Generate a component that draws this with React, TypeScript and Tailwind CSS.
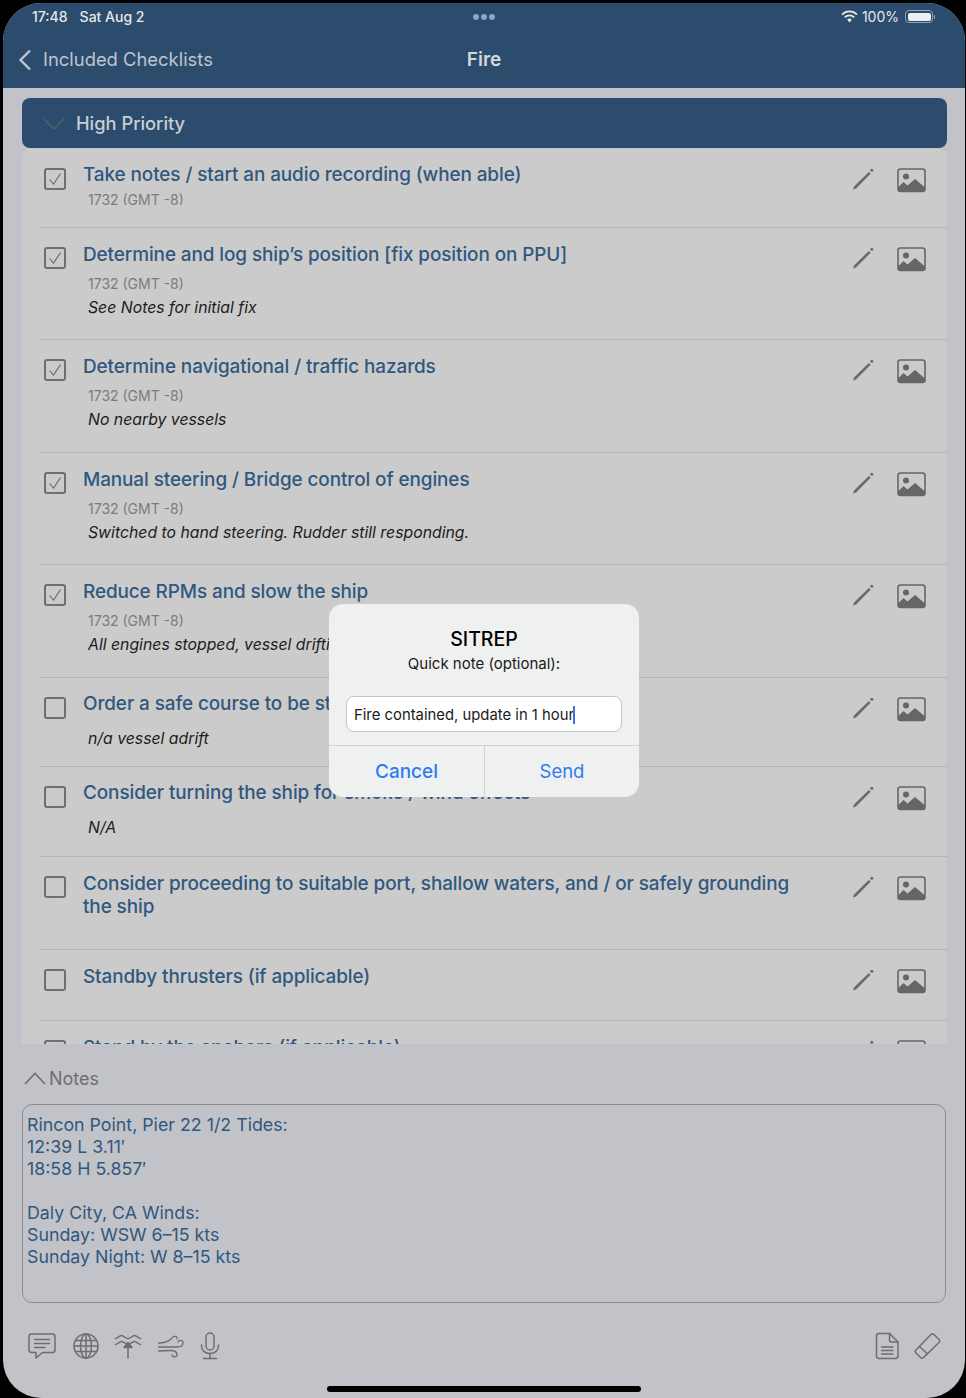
const NAVY = 'bg-[#2c4c6e]';

function PencilIcon() {
  return (
    <svg width="24" height="24" viewBox="0 0 24 24" className="shrink-0">
      <path d="M2 22.5 L3 19.5 L17.8 5 L19.6 6.8 L5 21.4 Z" fill="#6a6a6a" />
      <circle cx="20.8" cy="3.2" r="1.5" fill="#6a6a6a" />
    </svg>
  );
}

function ImageIcon() {
  return (
    <svg width="30" height="26" viewBox="0 0 30 26" className="shrink-0 mt-px">
      <rect x="1" y="1" width="27" height="22.4" rx="2.5" fill="none" stroke="#666" strokeWidth="1.6" />
      <circle cx="9" cy="8.5" r="3" fill="#666" />
      <path d="M1 19.5 L6.5 14 L10.5 17.5 L18 11 L28 19.5 V21 Q28 24 25.5 24 H3.5 Q1 24 1 21 Z" fill="#666" />
    </svg>
  );
}

function Checkbox({ checked }: { checked: boolean }) {
  return (
    <div className="w-[22px] h-[22px] shrink-0 rounded-[3px] border-2 border-[#6f6f6f] flex items-center justify-center">
      {checked && (
        <svg width="14" height="14" viewBox="0 0 14 14">
          <path d="M1.5 7.5 L5.5 12 L12.5 1.5" fill="none" stroke="#666" strokeWidth="1.1" />
        </svg>
      )}
    </div>
  );
}

interface Item {
  title: string[];
  height: number;
  checked: boolean;
  time?: boolean;
  note?: string;
  clipTime?: boolean;
  tight?: boolean;
  last?: boolean;
}

const items: Item[] = [
  { title: ['Take notes / start an audio recording (when able)'], height: 79, checked: true, time: true, clipTime: true, tight: true },
  { title: ['Determine and log ship’s position [fix position on PPU]'], height: 112, checked: true, time: true, note: 'See Notes for initial fix' },
  { title: ['Determine navigational / traffic hazards'], height: 113, checked: true, time: true, note: 'No nearby vessels' },
  { title: ['Manual steering / Bridge control of engines'], height: 112, checked: true, time: true, note: 'Switched to hand steering. Rudder still responding.' },
  { title: ['Reduce RPMs and slow the ship'], height: 113, checked: true, time: true, note: 'All engines stopped, vessel drifting' },
  { title: ['Order a safe course to be steered'], height: 89, checked: false, note: 'n/a vessel adrift', tight: true },
  { title: ['Consider turning the ship for smoke / wind effects'], height: 90, checked: false, note: 'N/A', tight: true },
  { title: ['Consider proceeding to suitable port, shallow waters, and / or safely grounding', 'the ship'], height: 93, checked: false },
  { title: ['Standby thrusters (if applicable)'], height: 71, checked: false },
  { title: ['Stand by the anchors (if applicable)'], height: 60, checked: false, last: true },
];

function Row({ item }: { item: Item }) {
  return (
    <div className="relative flex pl-[22px] shrink-0" style={{ height: item.height }}>
      <div className="pt-[19px]">
        <Checkbox checked={item.checked} />
      </div>
      <div className={`ml-[17px] flex-1 min-w-0 ${item.tight ? 'pt-[14px]' : 'pt-[15px]'}`}>
        {item.title.map((t) => (
          <div key={t} className="text-[18.9px] font-[450] leading-[23px] text-[#30587f] whitespace-nowrap tracking-[-0.08px]">{t}</div>
        ))}
        {item.time && (
          <div className={`ml-[5px] text-[14px] text-[#7b7b7b] leading-[20px] ${item.clipTime ? 'mt-[4px] h-[15px] overflow-hidden' : 'mt-[8px]'}`}>
            1732 (GMT -8)
          </div>
        )}
        {item.note && (
          <div className={`ml-[5px] text-[15.8px] italic text-[#1c1c1c] leading-[22px] whitespace-nowrap ${item.time ? 'mt-[3px]' : 'mt-[13px]'}`}>
            {item.note}
          </div>
        )}
      </div>
      <div className="absolute right-[20px] top-[18px] flex items-start gap-[22px]">
        <PencilIcon />
        <ImageIcon />
      </div>
      {!item.last && <div className="absolute left-[18px] right-0 bottom-0 h-px bg-[#b5b5b5]" />}
    </div>
  );
}

function ToolIcon({ children, w = 30 }: { children: React.ReactNode; w?: number }) {
  return (
    <svg width={w} height="30" viewBox={`0 0 ${w} 30`} fill="none" stroke="#6e6e70" strokeWidth="1.5" strokeLinecap="round" strokeLinejoin="round">
      {children}
    </svg>
  );
}

function Toolbar() {
  return (
    <div className="mt-[28px] ml-[5px] mr-[5px] flex items-center justify-between">
      <div className="flex items-center gap-[14.5px]">
        <ToolIcon>
          <path d="M4.5 3 H25.5 Q28 3 28 5.5 V19 Q28 21.5 25.5 21.5 H15.5 L9 27 V21.5 H4.5 Q2 21.5 2 19 V5.5 Q2 3 4.5 3 Z" />
          <path d="M7.5 8.5 H22.5 M7.5 12.5 H22.5 M7.5 16.5 H18" />
        </ToolIcon>
        <ToolIcon w={28}>
          <circle cx="14" cy="15" r="12" />
          <ellipse cx="14" cy="15" rx="5.5" ry="12" />
          <path d="M14 3 V27 M3.5 9.5 H24.5 M2 15 H26 M3.5 20.5 H24.5" />
        </ToolIcon>
        <ToolIcon w={28}>
          <path d="M1.5 7.5 C4 7 6 4.5 7.5 4.5 C9.5 4.5 11 7.5 14 7.5 C17 7.5 18.5 4.5 20.5 4.5 C22 4.5 24 7 26.5 7.5" />
          <path d="M1.5 13.5 C4 13 6 10.5 7.5 10.5 C9.5 10.5 11 13 14 13 C17 13 18.5 10.5 20.5 10.5 C22 10.5 24 13 26.5 13.5" />
          <path d="M14 27 V14" />
          <path d="M10 16.5 L14 11.5 L18 16.5 Z" fill="#6e6e70" />
        </ToolIcon>
        <ToolIcon w={28}>
          <path d="M1.5 12 C8 12 12 10.5 15 7 C17 4 21 5.5 20 8" strokeWidth="1.3" />
          <path d="M1.5 16 H20 C23 16 26 15 26 12 C26 9 22 8.5 21 11" strokeWidth="1.3" />
          <path d="M1.5 20 C7 19.5 10 19.5 13 19.5 C17 19.5 20 20.5 20 23.5 C20 26.5 15.5 26.5 15 24" strokeWidth="1.3" />
        </ToolIcon>
        <ToolIcon w={22}>
          <rect x="7" y="2" width="8" height="17" rx="4" />
          <path d="M2.5 14 V15 C2.5 19.5 6 22.5 11 22.5 C16 22.5 19.5 19.5 19.5 15 V14" />
          <path d="M11 22.5 V27 M4.5 27.5 H17.5" />
        </ToolIcon>
      </div>
      <div className="flex items-center gap-[13px]">
        <ToolIcon w={26}>
          <path d="M5 2.5 H15.5 L24 11 V25 Q24 27.5 21.5 27.5 H5 Q2.5 27.5 2.5 25 V5 Q2.5 2.5 5 2.5 Z" />
          <path d="M15.5 2.5 V9 Q15.5 11 17.5 11 H24" />
          <path d="M7.5 16 H19 M7.5 19.5 H19 M7.5 23 H19" />
        </ToolIcon>
        <ToolIcon w={28}>
          <path d="M2.5 19.5 L18 3.5 Q19.5 2 21 3.5 L26 8.5 Q27.5 10 26 11.5 L10.5 26.5 Q9 28 7.5 26.5 L2.5 21.5 Q1.5 20.5 2.5 19.5 Z" />
          <path d="M6.5 15.5 L14.5 23" />
        </ToolIcon>
      </div>
    </div>
  );
}

function Dialog() {
  return (
    <div className="absolute left-[326px] top-[601px] w-[310px] h-[193px] rounded-[14px] bg-[#eff0f0] flex flex-col">
      <div className="pt-[22px] text-center text-[19.5px] leading-[26px] font-medium text-black">SITREP</div>
      <div className="mt-[2px] text-center text-[15px] leading-[20px] text-[#1a1a1a]">Quick note (optional):</div>
      <div className="mt-[22px] mx-[17px] h-[36px] bg-white rounded-[8px] border border-[#c4c4c6] flex items-center pl-[7px] pt-[2px] text-[14.85px] text-[#1a1a1a]">
        Fire contained, update in 1 hour<span className="inline-block -ml-px w-[2px] h-[18px] bg-[#3f6fe0]" />
      </div>
      <div className="mt-[13px] flex-1 flex border-t border-[#d2d2d4] text-[#2f7bf0]">
        <div className="w-[156px] flex items-center justify-center pt-[2px] text-[19px] font-medium border-r border-[#d2d2d4]">Cancel</div>
        <div className="flex-1 flex items-center justify-center text-[18.5px]">Send</div>
      </div>
    </div>
  );
}

export default function App() {
  return (
    <div className="w-[966px] h-[1398px] bg-black pt-[3px] pl-[3px] pr-px overflow-hidden" style={{ fontFamily: 'Inter, "Noto Sans", sans-serif' }}>
      <div className="relative h-[1395px] rounded-[38px] overflow-hidden bg-[#c2c3c8] flex flex-col">
        <div className={`${NAVY} h-[85px] shrink-0`}>
          <div className="h-[27px] mb-px pl-[29px] pr-[30px] grid grid-cols-3 items-center text-[14px] font-medium text-[#e6e8ea]">
            <div className="flex">
              <span>17:48</span>
              <span className="ml-[12px]">Sat Aug 2</span>
            </div>
            <div className="flex justify-center gap-[2px] ml-[1px]">
              <span className="w-[6px] h-[6px] rounded-full bg-[#88a6c6]" />
              <span className="w-[6px] h-[6px] rounded-full bg-[#88a6c6]" />
              <span className="w-[6px] h-[6px] rounded-full bg-[#88a6c6]" />
            </div>
            <div className="flex items-center justify-end">
              <svg width="17" height="13" viewBox="0 0 17 13" className="mr-[4px]">
                <path d="M1 4.6 A10.5 10.5 0 0 1 16 4.6" fill="none" stroke="#e6e8ea" strokeWidth="1.7" />
                <path d="M3.7 7.3 A6.8 6.8 0 0 1 13.3 7.3" fill="none" stroke="#e6e8ea" strokeWidth="1.7" />
                <path d="M6.2 9.8 A3.2 3.2 0 0 1 10.8 9.8 L8.5 12.4 Z" fill="#e6e8ea" />
              </svg>
              <span className="font-normal">100%</span>
              <div className="ml-[6px] w-[28px] h-[13px] rounded-[4px] border border-[#8da2b8] p-[1.5px]">
                <div className="w-full h-full rounded-[2px] bg-[#eceef0]" />
              </div>
              <div className="ml-px w-px h-[4px] bg-[#8da2b8]" />
            </div>
          </div>
          <div className="grid grid-cols-3 items-center h-[57px] pt-px">
            <div className="flex items-center pl-[15px] text-[18.4px] text-[#bcc5cf]">
              <svg width="14" height="22" viewBox="0 0 14 22" className="shrink-0">
                <path d="M12 1.5 L2.5 11 L12 20.5" fill="none" stroke="#bcc5cf" strokeWidth="2.4" />
              </svg>
              <span className="ml-[11px] whitespace-nowrap">Included Checklists</span>
            </div>
            <div className="text-center text-[19px] font-semibold text-[#d3d7db]">Fire</div>
            <div />
          </div>
        </div>
        <div className="flex-1 min-h-0 flex flex-col pt-[10px]">
          <div className={`ml-[19px] mr-[18px] h-[50px] shrink-0 rounded-[8px] ${NAVY} flex items-center pl-[21px] pt-px`}>
            <svg width="22" height="12" viewBox="0 0 22 12">
              <path d="M1 1 L11 11 L21 1" fill="none" stroke="#55616e" strokeWidth="1.4" />
            </svg>
            <span className="ml-[11px] text-[18.3px] font-medium text-[#c9ced3]">High Priority</span>
          </div>
          <div className="ml-[19px] mr-[18px] mt-px h-[895px] shrink-0 rounded-t-[8px] bg-[#cbcbcb] overflow-hidden flex flex-col">
            {items.map((item) => (
              <Row key={item.title[0]} item={item} />
            ))}
          </div>
          <div className="px-[19px] flex-1 min-h-0">
            <div className="mt-[23px] h-[22px] flex items-center text-[#6e6e70] text-[18px]">
              <svg width="22" height="13" viewBox="0 0 22 13" className="shrink-0 ml-[2px]">
                <path d="M1 12 L11 1.5 L21 12" fill="none" stroke="#6e6e70" strokeWidth="1.6" />
              </svg>
              <span className="ml-[3px]">Notes</span>
            </div>
            <div className="mt-[15px] h-[199px] rounded-[10px] border border-[#8c8d90] px-[4px] pt-[9px] text-[17.8px] leading-[22px] text-[#30587f]">
              <div>Rincon Point, Pier 22 1/2 Tides:</div>
              <div>12:39 L 3.11′</div>
              <div>18:58 H 5.857′</div>
              <div className="h-[22px]" />
              <div>Daly City, CA Winds:</div>
              <div>Sunday: WSW 6–15 kts</div>
              <div>Sunday Night: W 8–15 kts</div>
            </div>
            <Toolbar />
          </div>
        </div>
        <Dialog />
        <div className="absolute left-[324px] bottom-[6px] w-[314px] h-[6px] rounded-full bg-black" />
      </div>
    </div>
  );
}
